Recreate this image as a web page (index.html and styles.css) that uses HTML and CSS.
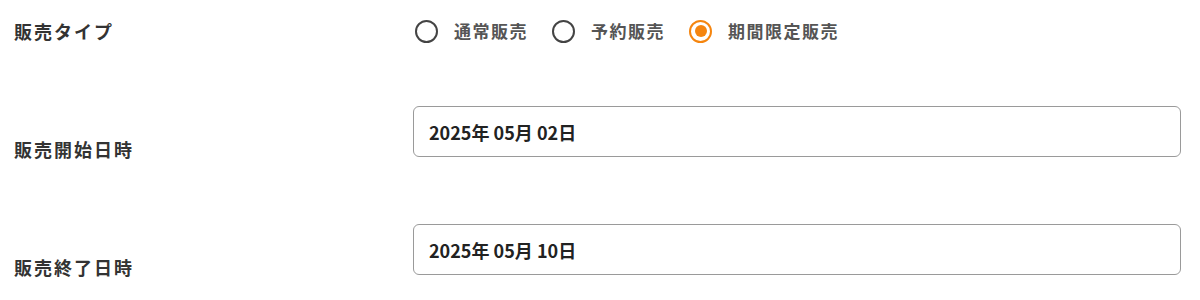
FILE: index.html
```html
<!DOCTYPE html>
<html>
  <head>
    <title>販売設定</title>
    <link rel="stylesheet" href="styles.css">
  </head>
  <body>
    <div class="form">
      <div class="row row-type">
        <label class="label">販売タイプ</label>
        <div class="radios">
          <label class="radio">
            <input type="radio" name="sale-type" value="normal">
            <span class="mark"></span>
            <span class="radio-text">通常販売</span>
          </label>
          <label class="radio">
            <input type="radio" name="sale-type" value="reserve">
            <span class="mark"></span>
            <span class="radio-text">予約販売</span>
          </label>
          <label class="radio">
            <input type="radio" name="sale-type" value="limited" checked>
            <span class="mark"></span>
            <span class="radio-text">期間限定販売</span>
          </label>
        </div>
      </div>

      <div class="row row-date">
        <label class="label">販売開始日時</label>
        <div class="date-field">2025年 05月 02日</div>
      </div>

      <div class="row row-date">
        <label class="label">販売終了日時</label>
        <div class="date-field">2025年 05月 10日</div>
      </div>
    </div>
  </body>
</html>
```

FILE: styles.css
```css
body {
  margin: 0;
  background-color: #fff;
  font-family: "Noto Sans CJK JP", "Noto Sans", sans-serif;
  color: #333;
}

.form {
  padding: 0 19px 0 14px;
}

.row {
  display: grid;
  grid-template-columns: 399px 1fr;
}

.row-type {
  height: 62px;
  align-items: center;
  margin-bottom: 44px;
}

.row-date {
  margin-bottom: 61px;
}

.label {
  font-size: 18px;
  line-height: 27px;
  font-weight: 700;
  letter-spacing: 2px;
  color: #333;
}

.row-date .label {
  padding-top: 30px;
}

.radios {
  display: flex;
  align-items: center;
  gap: 24px;
  padding-left: 2px;
}

.radio {
  display: flex;
  align-items: center;
  cursor: pointer;
}

.radio input {
  display: none;
}

.radio .mark {
  width: 19px;
  height: 19px;
  border: 2.5px solid #444;
  border-radius: 50%;
  position: relative;
  margin-right: 16px;
}

.radio input:checked + .mark {
  border-color: #f5850f;
}

.radio input:checked + .mark::after {
  content: "";
  position: absolute;
  top: 3.5px;
  left: 3.5px;
  width: 12px;
  height: 12px;
  border-radius: 50%;
  background-color: #f5850f;
}

.radio-text {
  font-size: 17px;
  line-height: 26px;
  font-weight: 700;
  letter-spacing: 1.5px;
  color: #555;
}

.date-field {
  height: 49px;
  border: 1px solid #9a9a9a;
  border-radius: 6px;
  padding: 0 15px;
  display: flex;
  align-items: center;
  font-size: 18px;
  font-weight: 700;
  color: #222;
}
```
